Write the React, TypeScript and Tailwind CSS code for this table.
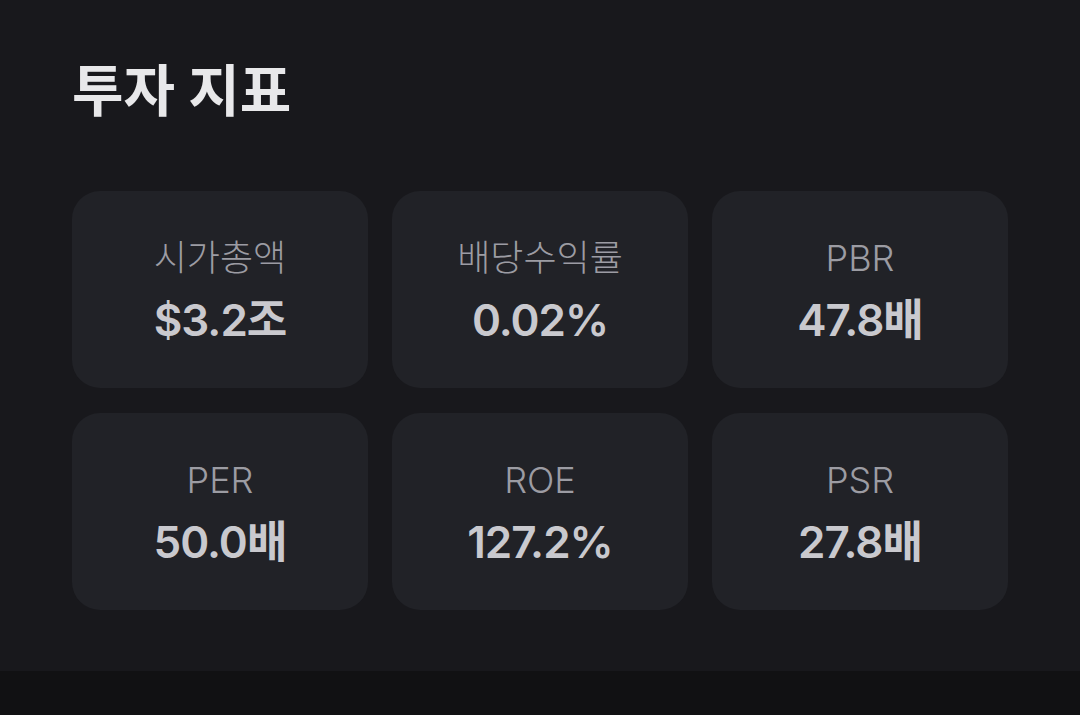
export default function App() {
  const metrics = [
    { label: '시가총액', value: '$3.2조' },
    { label: '배당수익률', value: '0.02%' },
    { label: 'PBR', value: '47.8배' },
    { label: 'PER', value: '50.0배' },
    { label: 'ROE', value: '127.2%' },
    { label: 'PSR', value: '27.8배' },
  ];

  return (
    <div
      className="min-h-[715px] bg-[#111113]"
      style={{ fontFamily: '"Inter", "Noto Sans CJK KR", sans-serif' }}
    >
      <section className="h-[671px] bg-[#18181c] px-[72px] pt-[57px]">
        {/* Title */}
        <h2 className="text-[56px] font-bold leading-[68px] text-[#e8e8ea]">
          투자 지표
        </h2>

        {/* Metric cards */}
        <div className="mt-[66px] grid w-[936px] grid-cols-3 gap-x-[24px] gap-y-[25px]">
          {metrics.map((m, i) => (
            <div
              key={i}
              className="flex h-[197px] flex-col items-center justify-center rounded-[28px] bg-[#212227]"
            >
              <div className="text-[36px] font-light leading-[44px] text-[#9c9ca3]">
                {m.label}
              </div>
              <div className="mt-[16px] text-[44px] font-semibold leading-[48px] tracking-[-1px] text-[#c9c9ce]">
                {m.value}
              </div>
            </div>
          ))}
        </div>
      </section>
    </div>
  );
}
